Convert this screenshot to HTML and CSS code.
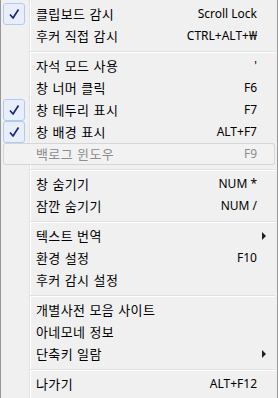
FILE: index.html
```html
<!DOCTYPE html>
<html lang="ko">
<head>
    <meta charset="UTF-8">
    <title>Tray Menu</title>
    <link rel="stylesheet" href="styles.css">
</head>
<body>
    <ul class="menu">
        <li class="item checked">
            <span class="mark"><svg width="22" height="22" viewBox="0 0 22 22"><path d="M7 11.5 L10 15 L15.5 6.5" fill="none" stroke="#142a86" stroke-width="1.7" stroke-linejoin="round"/></svg></span>
            <span class="label">클립보드 감시</span>
            <span class="key">Scroll Lock</span>
            <span class="sub"></span>
        </li>
        <li class="item">
            <span class="mark"></span>
            <span class="label">후커 직접 감시</span>
            <span class="key">CTRL+ALT+₩</span>
            <span class="sub"></span>
        </li>
        <li class="sep"></li>
        <li class="item">
            <span class="mark"></span>
            <span class="label">자석 모드 사용</span>
            <span class="key">'</span>
            <span class="sub"></span>
        </li>
        <li class="item">
            <span class="mark"></span>
            <span class="label">창 너머 클릭</span>
            <span class="key">F6</span>
            <span class="sub"></span>
        </li>
        <li class="item checked">
            <span class="mark"><svg width="22" height="22" viewBox="0 0 22 22"><path d="M7 11.5 L10 15 L15.5 6.5" fill="none" stroke="#142a86" stroke-width="1.7" stroke-linejoin="round"/></svg></span>
            <span class="label">창 테두리 표시</span>
            <span class="key">F7</span>
            <span class="sub"></span>
        </li>
        <li class="item checked">
            <span class="mark"><svg width="22" height="22" viewBox="0 0 22 22"><path d="M7 11.5 L10 15 L15.5 6.5" fill="none" stroke="#142a86" stroke-width="1.7" stroke-linejoin="round"/></svg></span>
            <span class="label">창 배경 표시</span>
            <span class="key">ALT+F7</span>
            <span class="sub"></span>
        </li>
        <li class="item disabled hover">
            <span class="mark"></span>
            <span class="label">백로그 윈도우</span>
            <span class="key">F9</span>
            <span class="sub"></span>
        </li>
        <li class="sep"></li>
        <li class="item">
            <span class="mark"></span>
            <span class="label">창 숨기기</span>
            <span class="key">NUM *</span>
            <span class="sub"></span>
        </li>
        <li class="item">
            <span class="mark"></span>
            <span class="label">잠깐 숨기기</span>
            <span class="key">NUM /</span>
            <span class="sub"></span>
        </li>
        <li class="sep"></li>
        <li class="item">
            <span class="mark"></span>
            <span class="label">텍스트 번역</span>
            <span class="key"></span>
            <span class="sub"><i class="arrow"></i></span>
        </li>
        <li class="item">
            <span class="mark"></span>
            <span class="label">환경 설정</span>
            <span class="key">F10</span>
            <span class="sub"></span>
        </li>
        <li class="item">
            <span class="mark"></span>
            <span class="label">후커 감시 설정</span>
            <span class="key"></span>
            <span class="sub"></span>
        </li>
        <li class="sep"></li>
        <li class="item">
            <span class="mark"></span>
            <span class="label">개별사전 모음 사이트</span>
            <span class="key"></span>
            <span class="sub"></span>
        </li>
        <li class="item">
            <span class="mark"></span>
            <span class="label">아네모네 정보</span>
            <span class="key"></span>
            <span class="sub"></span>
        </li>
        <li class="item">
            <span class="mark"></span>
            <span class="label">단축키 일람</span>
            <span class="key"></span>
            <span class="sub"><i class="arrow"></i></span>
        </li>
        <li class="sep"></li>
        <li class="item">
            <span class="mark"></span>
            <span class="label">나가기</span>
            <span class="key">ALT+F12</span>
            <span class="sub"></span>
        </li>
    </ul>
</body>
</html>
```

FILE: styles.css
```css
body {
    margin: 0;
    background: #ffffff;
}
.menu {
    list-style: none;
    margin: 0;
    padding: 3px 0 2px 0;
    width: 276px;
    height: 393px;
    background-color: #f0f0f0;
    background-image: linear-gradient(to right, transparent 28px, #e2e3e3 28px, #e2e3e3 29px, #ffffff 29px, #ffffff 30px, transparent 30px);
    border: 1px solid #979797;
    border-top: none;
}
.item {
    display: flex;
    align-items: center;
    height: 22px;
    margin: 0 2px;
    border-radius: 3px;
    font-family: "Noto Sans", "Noto Sans CJK KR", sans-serif;
    font-size: 12px;
    color: #000000;
}
.item.hover {
    background: #f2f2f2;
    box-shadow: inset 0 0 0 1px #d6d6d6;
}
.mark {
    width: 22px;
    height: 22px;
    flex: none;
    box-sizing: border-box;
    border-radius: 3px;
}
.checked .mark {
    background: #e8effa;
    border: 1px solid #aecbf0;
}
.checked .mark svg {
    display: block;
    margin: -1px;
}
.label {
    flex: 1;
    margin-left: 11px;
    font-family: "Noto Sans CJK KR", sans-serif;
    font-size: 13px;
    letter-spacing: 0.4px;
    line-height: 22px;
}
.key {
    text-align: right;
    white-space: nowrap;
    line-height: 22px;
}
.sub {
    width: 18px;
    flex: none;
    display: flex;
    align-items: center;
}
.arrow {
    display: block;
    margin-left: 5px;
    width: 0;
    height: 0;
    border-left: 4px solid #202020;
    border-top: 4px solid transparent;
    border-bottom: 4px solid transparent;
}
.disabled {
    color: #8d8d8d;
}
.sep {
    margin: 4px 2px 2px 29px;
    border-top: 1px solid #e0e0e0;
    border-bottom: 1px solid #ffffff;
}
```
